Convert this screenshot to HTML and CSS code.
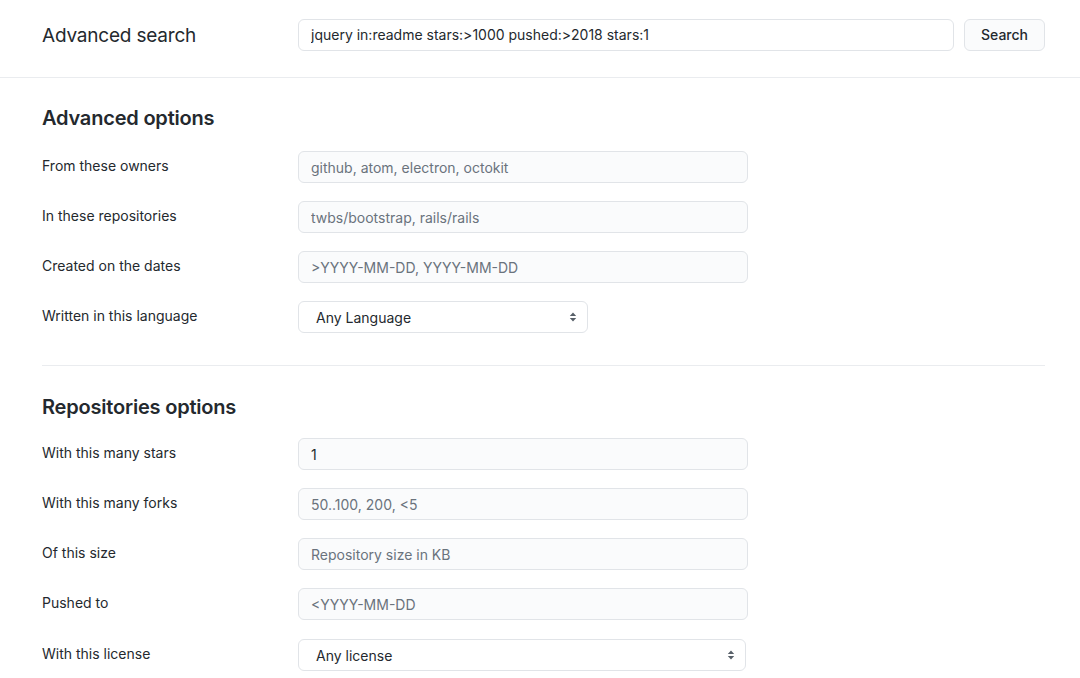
FILE: index.html
```html
<!DOCTYPE html>
<html>
<head>
<meta charset="utf-8">
<link rel="stylesheet" href="styles.css">
</head>
<body>
<header class="topbar">
  <h1 class="title">Advanced search</h1>
  <div class="search-field">
    <input class="search-input" type="text" value="jquery in:readme stars:&gt;1000 pushed:&gt;2018 stars:1">
    <button class="btn">Search</button>
  </div>
</header>
<main class="content">
  <section class="group">
    <h2 class="group-title">Advanced options</h2>
    <div class="row"><label class="label">From these owners</label><input class="field" type="text" placeholder="github, atom, electron, octokit"></div>
    <div class="row"><label class="label">In these repositories</label><input class="field" type="text" placeholder="twbs/bootstrap, rails/rails"></div>
    <div class="row"><label class="label">Created on the dates</label><input class="field" type="text" placeholder="&gt;YYYY-MM-DD, YYYY-MM-DD"></div>
    <div class="row"><label class="label">Written in this language</label>
      <div class="select select-short"><span>Any Language</span>
        <svg class="caret" width="8" height="12" viewBox="0 0 8 12"><path d="M4 1.5L7.2 5H0.8z M4 10.5L0.8 7H7.2z" fill="#586069"/></svg>
      </div>
    </div>
  </section>
  <hr class="divider">
  <section class="group">
    <h2 class="group-title group-title-2">Repositories options</h2>
    <div class="row"><label class="label">With this many stars</label><input class="field filled" type="text" value="1"></div>
    <div class="row"><label class="label">With this many forks</label><input class="field" type="text" placeholder="50..100, 200, &lt;5"></div>
    <div class="row"><label class="label">Of this size</label><input class="field" type="text" placeholder="Repository size in KB"></div>
    <div class="row"><label class="label">Pushed to</label><input class="field" type="text" placeholder="&lt;YYYY-MM-DD"></div>
    <div class="row row-last"><label class="label">With this license</label>
      <div class="select select-long"><span>Any license</span>
        <svg class="caret" width="8" height="12" viewBox="0 0 8 12"><path d="M4 1.5L7.2 5H0.8z M4 10.5L0.8 7H7.2z" fill="#586069"/></svg>
      </div>
    </div>
  </section>
</main>
</body>
</html>
```

FILE: styles.css
```css
* { box-sizing: border-box; }
html, body { margin: 0; padding: 0; background: #fff; }
body {
  font-family: Inter, "Liberation Sans", Arial, sans-serif;
  color: #24292e;
  font-size: 14px;
  overflow: hidden;
}
.topbar {
  display: flex;
  align-items: center;
  height: 78px;
  padding: 0 35px 8px 42px;
  border-bottom: 1px solid #eaecef;
}
.title {
  margin: 0;
  width: 256px;
  font-size: 19px;
  font-weight: 400;
  letter-spacing: -0.2px;
  line-height: 26px;
  padding-top: 2px;
}
.search-field {
  flex: 1;
  display: flex;
  gap: 10px;
}
.search-input {
  flex: 1;
  height: 32px;
  border: 1px solid #e1e4e8;
  border-radius: 6px;
  background: #fff;
  padding: 0 12px;
  font: inherit;
  font-size: 14px;
  color: #24292e;
  outline: none;
}
.btn {
  width: 81px;
  height: 32px;
  border: 1px solid #e1e4e8;
  border-radius: 6px;
  background: #fafbfc;
  font: inherit;
  font-size: 14px;
  font-weight: 500;
  color: #24292e;
}
.content {
  padding: 25px 35px 0 42px;
}
.group-title {
  margin: 0 0 18px;
  height: 30px;
  line-height: 30px;
  font-size: 20px;
  font-weight: 600;
  letter-spacing: -0.2px;
}
.group-title-2 { margin-bottom: 16px; }
.row {
  display: flex;
  align-items: center;
  height: 32px;
  margin-bottom: 18px;
}
.row-last { margin-top: 19px; }
.label {
  width: 256px;
  font-size: 14px;
  line-height: 20px;
  padding-bottom: 2px;
}
.field {
  width: 450px;
  height: 32px;
  border: 1px solid #e1e4e8;
  border-radius: 6px;
  background: #fafbfc;
  padding: 0 12px;
  font: inherit;
  font-size: 14px;
  color: #24292e;
  outline: none;
}
.field::placeholder { color: #6a737d; }
.select {
  display: flex;
  align-items: center;
  justify-content: space-between;
  height: 32px;
  border: 1px solid #e1e4e8;
  border-radius: 6px;
  background: #fff;
  padding: 0 10px 0 17px;
  font-size: 14px;
}
.select-short { width: 290px; }
.select-long { width: 448px; }
.divider {
  border: 0;
  border-top: 1px solid #eaecef;
  margin: 32px 0 26px;
}
```
